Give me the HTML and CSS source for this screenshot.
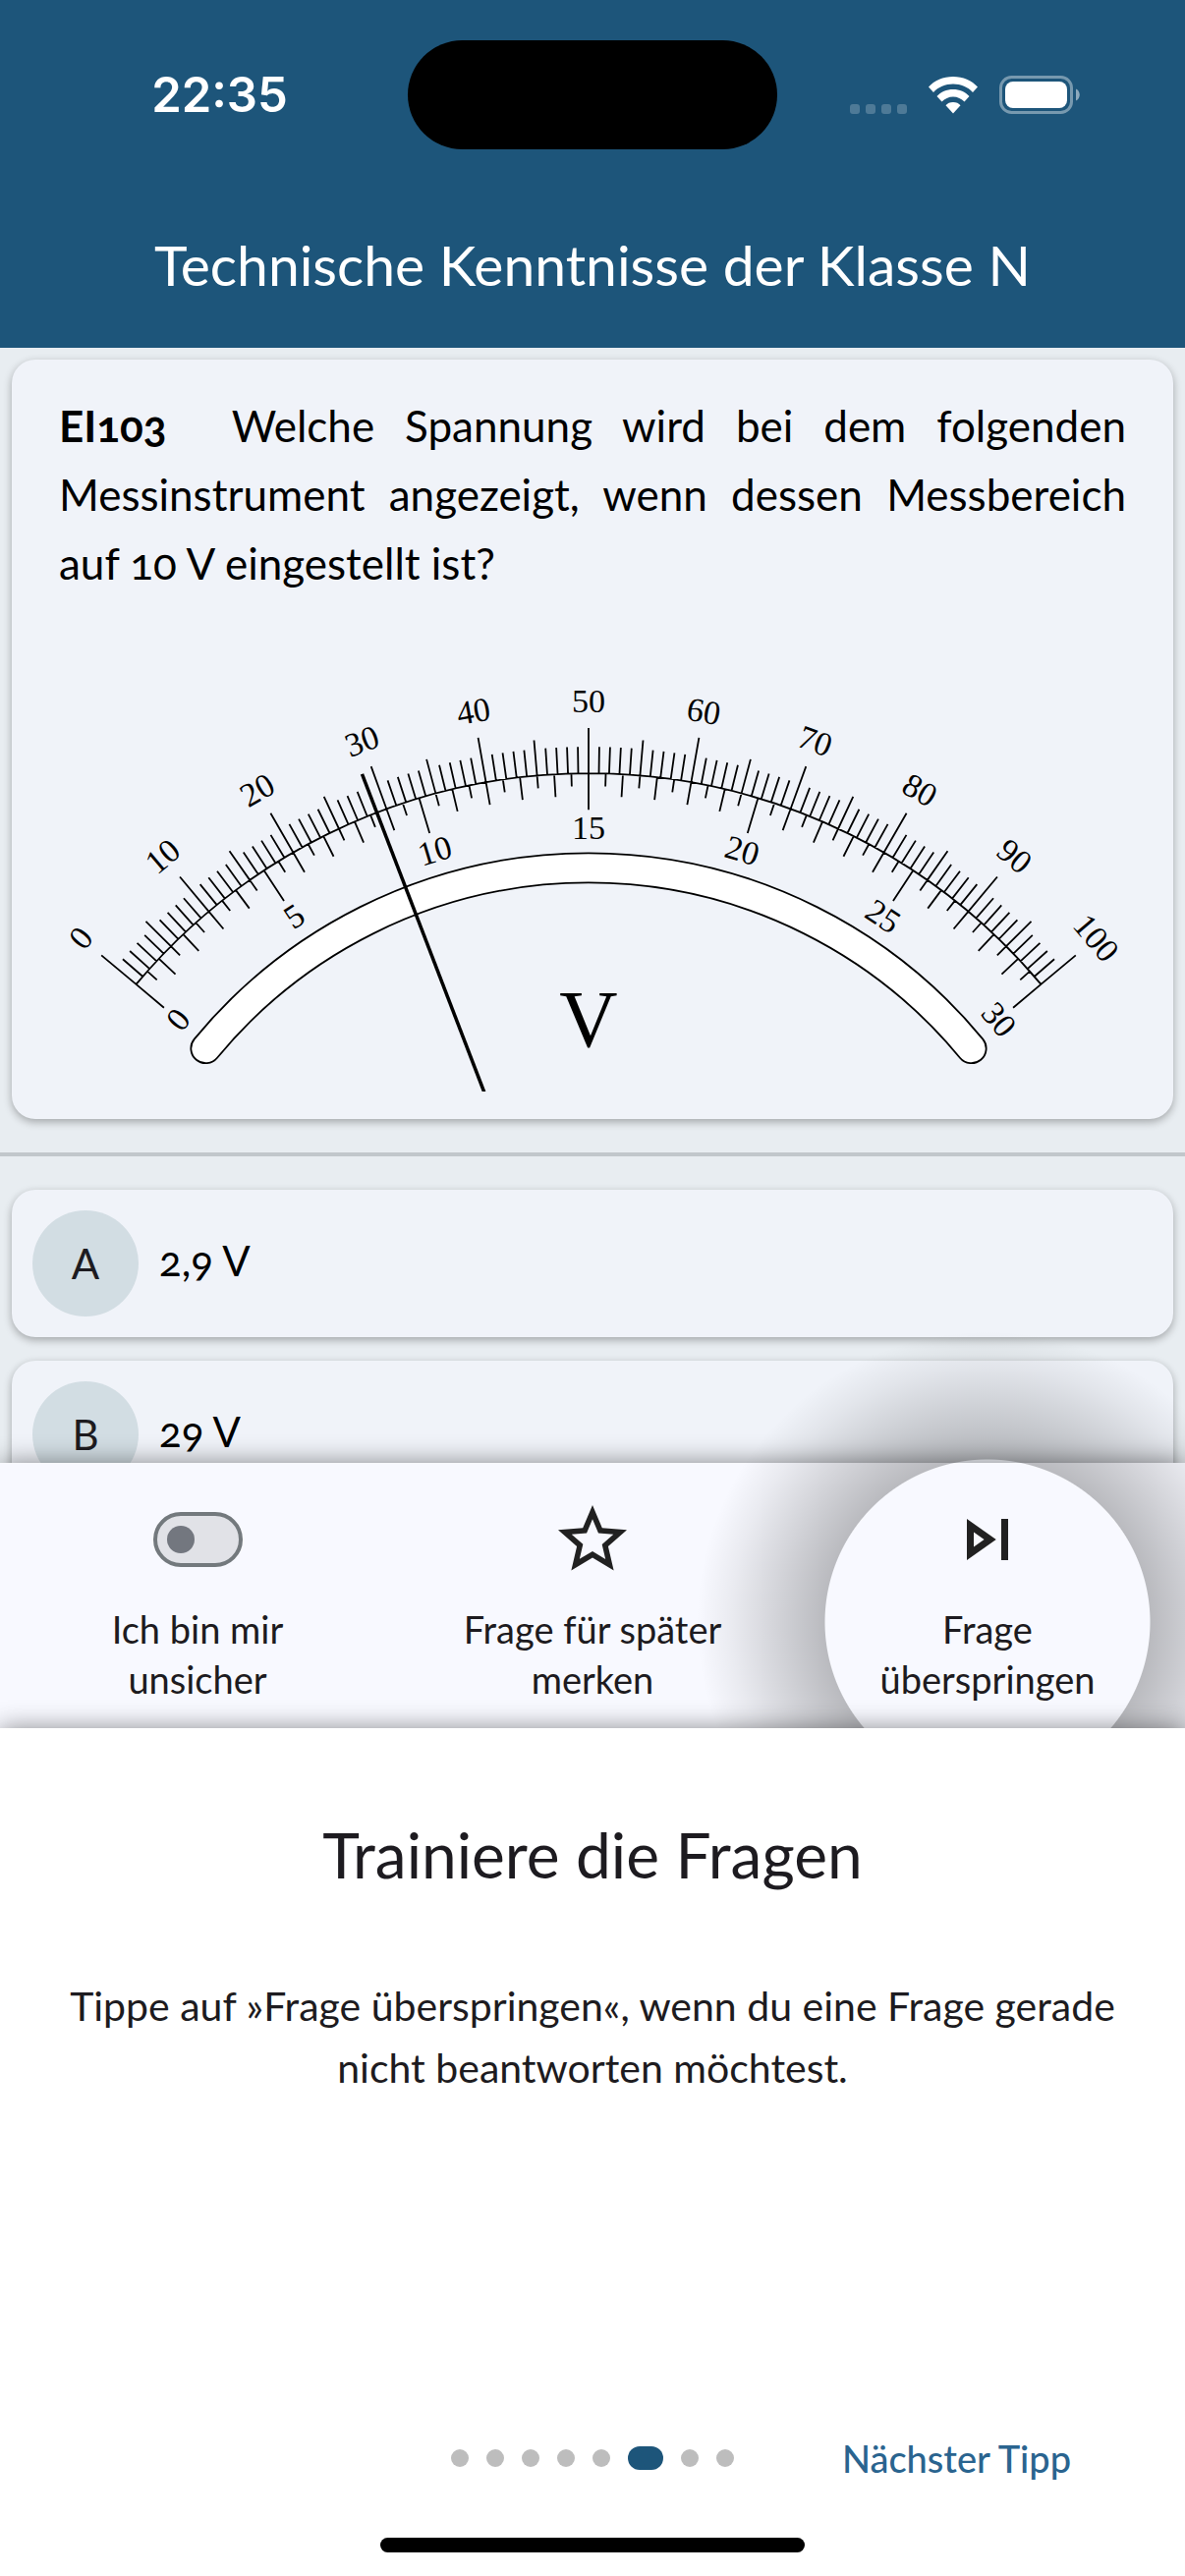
FILE: index.html
```html
<!DOCTYPE html>
<html lang="de">
<head>
<meta charset="utf-8">
<meta name="viewport" content="width=device-width, initial-scale=1">
<title>Technische Kenntnisse der Klasse N</title>
<link rel="stylesheet" href="styles.css">
</head>
<body>
<div class="app">
  <header class="header">
    <div class="status">
      <time class="clock">22:35</time>
      <div class="island"></div>
      <div class="indicators">
        <div class="signal"><i></i><i></i><i></i><i></i></div>
        <svg class="wifi" viewBox="0 0 50 38" aria-hidden="true">
          <path d="M25 0C35 0 44 4 50 10.500L45 16C40 10.500 33 7.500 25 7.500S10 10.500 5 16L0 10.500C6 4 15 0 25 0z"/>
          <path d="M25 13c6.500 0 12.500 2.500 16.500 7L36.500 25.500C33.500 22.500 29.500 20.500 25 20.500S16.500 22.500 13.500 25.500L8.500 20C12.500 15.500 18.500 13 25 13z"/>
          <path d="M25 26c3 0 6 1.200 7.500 3.300L25 37.500 17.500 29.300C19 27.200 22 26 25 26z"/>
        </svg>
        <svg class="battery" viewBox="0 0 82 39" aria-hidden="true">
          <rect x="1.500" y="1.500" width="72" height="36" rx="11" fill="none" stroke="#fff" stroke-opacity=".4" stroke-width="3"/>
          <rect x="6" y="6" width="63" height="27" rx="8" fill="#fff"/>
          <path d="M78 13.500c5 2 5 10 0 12z" fill="#fff" fill-opacity=".5"/>
        </svg>
      </div>
    </div>
    <h1 class="title">Technische Kenntnisse der Klasse N</h1>
  </header>

  <main class="content">
    <section class="card question">
      <p class="question-text"><b class="number">EI103</b>Welche Spannung wird bei dem folgenden Messinstrument angezeigt, wenn dessen Messbereich auf 10 V eingestellt ist?</p>
      <svg class="gauge" viewBox="0 0 1084 430" role="img" aria-label="Zeigerinstrument">
        <g id="scale"></g>
      </svg>
    </section>
    <hr class="divider">
    <div class="answers">
      <button class="card answer" type="button"><span class="letter">A</span><span class="answer-text">2,9 V</span></button>
      <button class="card answer" type="button"><span class="letter">B</span><span class="answer-text">29 V</span></button>
    </div>
  </main>

  <nav class="toolbar">
    <label class="tool">
      <span class="tool-icon"><input class="switch" type="checkbox" role="switch"></span>
      <span>Ich bin mir<br>unsicher</span>
    </label>
    <button class="tool" type="button">
      <svg class="tool-icon" viewBox="0 0 24 24" aria-hidden="true"><path d="M22 9.240l-7.190-.62L12 2 9.190 8.630 2 9.240l5.460 4.730L5.820 21 12 17.270 18.180 21l-1.630-7.030L22 9.240zM12 15.400l-3.760 2.270 1-4.280-3.320-2.880 4.380-.38L12 6.100l1.710 4.040 4.380.38-3.320 2.880 1 4.280L12 15.400z"/></svg>
      <span>Frage für später<br>merken</span>
    </button>
    <button class="tool spotlight" type="button">
      <svg class="tool-icon" viewBox="0 0 24 24" aria-hidden="true"><path d="M6 18l8.500-6L6 6v12zm2-8.140L11.030 12 8 14.140V9.860zM16 6h2v12h-2z"/></svg>
      <span>Frage<br>überspringen</span>
    </button>
  </nav>
</div>

<section class="sheet">
  <h2 class="sheet-title">Trainiere die Fragen</h2>
  <p class="sheet-text">Tippe auf »Frage überspringen«, wenn du eine Frage gerade nicht beantworten möchtest.</p>
  <div class="sheet-footer">
    <div class="dots"><i></i><i></i><i></i><i></i><i></i><i class="active"></i><i></i><i></i></div>
    <button class="next" type="button">Nächster Tipp</button>
  </div>
  <div class="home"></div>
</section>
<script src="gauge.js"></script>
</body>
</html>
```
FILE: styles.css
```css
* {
  box-sizing: border-box;
}

body {
  margin: 0;
  height: 100vh;
  display: flex;
  flex-direction: column;
  overflow: hidden;
  background: #fff;
  color: #1d1b20;
  font-family: Lato, "Liberation Sans", sans-serif;
}

h1, h2, p {
  margin: 0;
  font-weight: 400;
}

button {
  margin: 0;
  border: 0;
  background: none;
  color: inherit;
  font: inherit;
}

.app {
  flex: 1;
  min-height: 0;
  display: flex;
  flex-direction: column;
  overflow-x: clip;
}

/* Header */
.header {
  background: #1d557a;
  color: #fff;
  padding: 41px 0 48px;
}

.status {
  display: grid;
  grid-template-columns: 1fr auto 1fr;
  align-items: center;
}

.clock {
  padding-left: 32px;
  justify-self: center;
  font: 600 49px/60px Inter, sans-serif;
}

.island {
  width: 376px;
  height: 111px;
  border-radius: 56px;
  background: #000;
}

.indicators {
  display: flex;
  align-items: center;
  gap: 22px;
  padding-left: 74px;
}

.signal {
  display: flex;
  gap: 6px;
  padding-top: 28px;
}

.signal i {
  width: 10px;
  height: 10px;
  border-radius: 3px;
  background: rgba(255, 255, 255, .22);
}

.wifi {
  width: 50px;
  height: 38px;
  fill: #fff;
}

.battery {
  width: 82px;
  height: 39px;
}

.title {
  padding-top: 80px;
  font-size: 57px;
  line-height: 74px;
  text-align: center;
}

/* Question and answers */
.content {
  flex: 1;
  min-height: 0;
  overflow: hidden;
  background: #e8edf1;
  padding-top: 12px;
}

.card {
  margin: 0 12px;
  border-radius: 24px;
  background: #f0f3f9;
  color: #000;
  box-shadow: 0 3px 8px rgba(0, 0, 0, .3);
}

.question {
  padding: 32px 48px 28px;
}

.question-text {
  font-size: 44px;
  line-height: 70px;
  text-align: justify;
  font-variant-numeric: oldstyle-nums;
}

.number {
  margin-right: 66px;
}

.gauge {
  display: block;
  width: 100%;
  margin-top: 72px;
  font-family: "Liberation Serif", serif;
}

.divider {
  height: 4px;
  margin: 34px 0;
  border: 0;
  background: #c1c7cb;
}

.answers {
  display: grid;
  gap: 24px;
}

.answer {
  display: flex;
  align-items: center;
  gap: 21px;
  padding: 21px;
  font-size: 42px;
}

.answer-text {
  padding-bottom: 6px;
  font-variant-numeric: oldstyle-nums;
}

.letter {
  width: 108px;
  height: 108px;
  border-radius: 50%;
  background: #d2dde3;
  color: #1d1b20;
  line-height: 108px;
  text-align: center;
}

/* Toolbar */
.toolbar {
  position: relative;
  display: grid;
  grid-template-columns: repeat(3, 1fr);
  background: #f8f9ff;
  box-shadow: 0 0 24px rgba(0, 0, 0, .45);
}

.tool {
  display: flex;
  flex-direction: column;
  align-items: center;
  gap: 24px;
  padding: 36px 0 24px;
  font-size: 38px;
  line-height: 51px;
  text-align: center;
}

.tool-icon {
  display: flex;
  align-items: center;
  width: 84px;
  height: 84px;
  justify-content: center;
  fill: #212121;
}

.switch {
  appearance: none;
  flex: none;
  display: flex;
  align-items: center;
  width: 91px;
  height: 56px;
  margin: 0;
  padding: 0 10px;
  border: 4px solid #73797d;
  border-radius: 28px;
  background: #e1e2e7;
}

.switch::before {
  content: "";
  width: 28px;
  height: 28px;
  border-radius: 50%;
  background: #73777f;
}

.spotlight {
  position: relative;
}

.spotlight::before {
  content: "";
  position: absolute;
  left: 50%;
  top: 162px;
  width: 600px;
  height: 600px;
  margin: -300px;
  background: radial-gradient(circle, transparent 165px, rgba(0, 0, 0, .25) 166px, rgba(0, 0, 0, .16) 210px, rgba(0, 0, 0, .06) 260px, transparent 296px);
  pointer-events: none;
}

/* Tip sheet */
.sheet {
  position: relative;
  padding: 85px 48px 24px;
  background: #fff;
  box-shadow: 0 0 24px rgba(0, 0, 0, .45);
  text-align: center;
}

.sheet-title {
  font-size: 64px;
  line-height: 88px;
}

.sheet-text {
  margin-top: 78px;
  font-size: 41px;
  line-height: 63px;
}

.sheet-footer {
  display: grid;
  grid-template-columns: 1fr auto 1fr;
  align-items: center;
  margin: 336px -48px 0;
}

.dots {
  grid-column: 2;
  display: flex;
  align-items: center;
  gap: 18px;
}

.dots i {
  width: 18px;
  height: 18px;
  border-radius: 50%;
  background: #bdbdbd;
}

.dots .active {
  width: 36px;
  height: 24px;
  border-radius: 12px;
  background: #1d557a;
}

.next {
  padding: 0 12px 0 6px;
  color: #2a648f;
  font-size: 38px;
  font-weight: 500;
  line-height: 60px;
}

.home {
  width: 432px;
  height: 15px;
  margin: 51px auto 0;
  border-radius: 8px;
  background: #000;
}
```
FILE: gauge.js
```js
// Draws the dual scale (0-100 outside, 0-30 inside), the mirror band and the needle.
const NS = "http://www.w3.org/2000/svg";
const group = document.getElementById("scale");
const CX = 538, CY = 707, R = 600;

function point(r, deg) {
  const a = deg * Math.PI / 180;
  return (CX + r * Math.sin(a)).toFixed(1) + " " + (CY - r * Math.cos(a)).toFixed(1);
}

function add(name, attrs, text) {
  const el = document.createElementNS(NS, name);
  for (const key in attrs) el.setAttribute(key, attrs[key]);
  if (text !== undefined) el.textContent = text;
  group.appendChild(el);
}

function line(r1, r2, deg) {
  return "M" + point(r1, deg) + "L" + point(r2, deg);
}

function label(value, r, deg) {
  add("text", {
    x: CX, y: CY - r, "font-size": 34, "text-anchor": "middle",
    transform: `rotate(${deg} ${CX} ${CY})`
  }, value);
}

let d = `M${point(R, -50)}A${R} ${R} 0 0 1 ${point(R, 50)}`;
for (let v = 0; v <= 100; v++) {
  const length = v % 10 === 0 ? 46 : v % 5 === 0 ? 36 : 27;
  d += line(R, R + length, v - 50);
  if (v % 10 === 0) label(v, 662, v - 50);
}
for (let i = 0; i <= 60; i++) {
  const deg = i * 100 / 60 - 50;
  const length = i % 10 === 0 ? 37 : i % 2 === 0 ? 23 : 13;
  d += line(R, R - length, deg);
  if (i % 10 === 0) label(i / 2, 533, deg);
}
add("path", { d, fill: "none", stroke: "#000", "stroke-width": 1.8 });

const A = 50.5;
add("path", {
  d: `M${point(519, -A)}A519 519 0 0 1 ${point(519, A)}A15 15 0 0 1 ${point(489, A)}A489 489 0 0 0 ${point(489, -A)}A15 15 0 0 1 ${point(519, -A)}z`,
  fill: "#fff", stroke: "#000", "stroke-width": 1.8
});
add("path", { d: line(642, 296, -21), stroke: "#000", "stroke-width": 3.5 });
add("text", { x: CX, y: 384, "font-size": 82, "text-anchor": "middle" }, "V");
```
